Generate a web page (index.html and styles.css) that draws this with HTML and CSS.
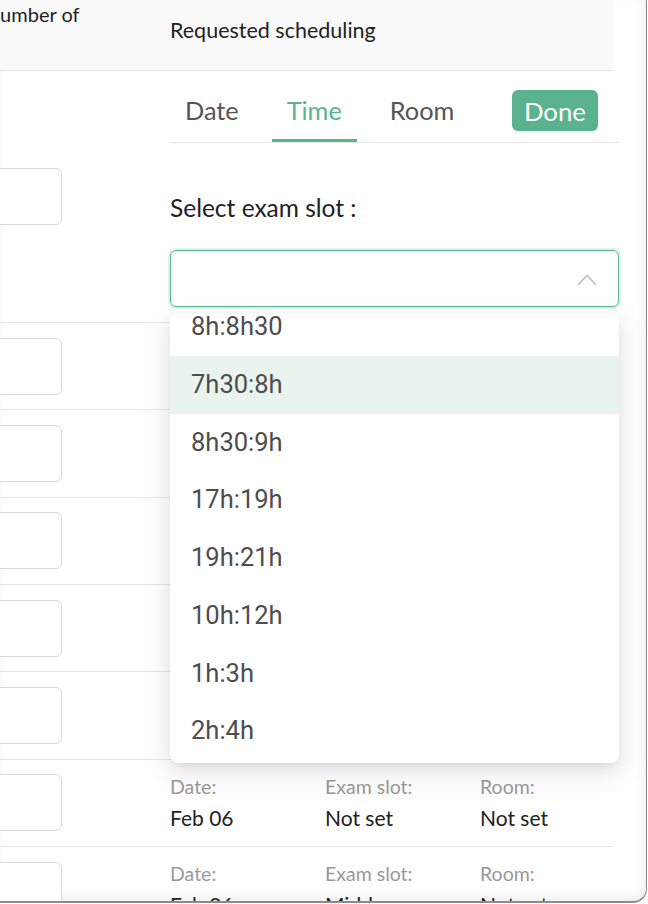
FILE: index.html
```html
<!DOCTYPE html>
<html>
<head>
    <title>Exam scheduling</title>
    <link rel="stylesheet" href="styles.css">
</head>
<body>
    <div class="window">
        <div class="table">
            <div class="row head">
                <div class="cell first"><span class="head-left">Number of</span></div>
                <div class="cell second">Requested scheduling</div>
            </div>

            <div class="row main">
                <div class="cell first"><div class="input"></div></div>
                <div class="cell second editor">
                    <div class="tabs">
                        <div class="tab">Date</div>
                        <div class="tab active">Time</div>
                        <div class="tab">Room</div>
                        <button class="done">Done</button>
                    </div>
                    <div class="field-label">Select exam slot :</div>
                    <div class="select-wrap">
                        <div class="select">
                            <svg class="arrow" width="20" height="12" viewBox="0 0 20 12">
                                <path d="M1 11 L10 1.5 L19 11" fill="none" stroke="#bdbdbd" stroke-width="1.6"/>
                            </svg>
                        </div>
                        <div class="dropdown">
                            <div class="options">
                                <div class="option">8h:8h30</div>
                                <div class="option hover">7h30:8h</div>
                                <div class="option">8h30:9h</div>
                                <div class="option">17h:19h</div>
                                <div class="option">19h:21h</div>
                                <div class="option">10h:12h</div>
                                <div class="option">1h:3h</div>
                                <div class="option">2h:4h</div>
                            </div>
                        </div>
                    </div>
                </div>
            </div>

            <div class="row info">
                <div class="cell first"><div class="input"></div></div>
                <div class="cell second"><div class="details"><span class="lbl">Date:</span><span class="lbl">Exam slot:</span><span class="lbl">Room:</span><span class="val">Feb 06</span><span class="val">Not set</span><span class="val">Not set</span></div></div>
            </div>
            <div class="row info">
                <div class="cell first"><div class="input"></div></div>
                <div class="cell second"><div class="details"><span class="lbl">Date:</span><span class="lbl">Exam slot:</span><span class="lbl">Room:</span><span class="val">Feb 06</span><span class="val">Not set</span><span class="val">Not set</span></div></div>
            </div>
            <div class="row info">
                <div class="cell first"><div class="input"></div></div>
                <div class="cell second"><div class="details"><span class="lbl">Date:</span><span class="lbl">Exam slot:</span><span class="lbl">Room:</span><span class="val">Feb 06</span><span class="val">Not set</span><span class="val">Not set</span></div></div>
            </div>
            <div class="row info">
                <div class="cell first"><div class="input"></div></div>
                <div class="cell second"><div class="details"><span class="lbl">Date:</span><span class="lbl">Exam slot:</span><span class="lbl">Room:</span><span class="val">Feb 06</span><span class="val">Not set</span><span class="val">Not set</span></div></div>
            </div>
            <div class="row info">
                <div class="cell first"><div class="input"></div></div>
                <div class="cell second"><div class="details"><span class="lbl">Date:</span><span class="lbl">Exam slot:</span><span class="lbl">Room:</span><span class="val">Feb 06</span><span class="val">Not set</span><span class="val">Not set</span></div></div>
            </div>
            <div class="row info">
                <div class="cell first"><div class="input"></div></div>
                <div class="cell second"><div class="details"><span class="lbl">Date:</span><span class="lbl">Exam slot:</span><span class="lbl">Room:</span><span class="val">Feb 06</span><span class="val">Not set</span><span class="val">Not set</span></div></div>
            </div>
            <div class="row info">
                <div class="cell first"><div class="input"></div></div>
                <div class="cell second"><div class="details"><span class="lbl">Date:</span><span class="lbl">Exam slot:</span><span class="lbl">Room:</span><span class="val">Feb 06</span><span class="val">Midday</span><span class="val">Not set</span></div></div>
            </div>
        </div>
    </div>
</body>
</html>
```

FILE: styles.css
```css
body {
    margin: 0;
    background-color: #fff;
    font-family: Lato, "Open Sans", sans-serif;
    color: #222;
}

.window {
    width: 646px;
    height: 901px;
    overflow: hidden;
    background-color: #fff;
    border-right: 1px solid #8c8c8c;
    border-bottom: 2px solid #8c8c8c;
    border-bottom-right-radius: 14px;
    box-shadow: inset -2px -4px 10px rgba(0, 0, 0, 0.07);
}

.table {
    width: 644px;
    margin-left: -31px;
}

.row {
    display: grid;
    grid-template-columns: 201px 443px;
    align-items: center;
    border-bottom: 1px solid #e6e6e6;
    box-sizing: border-box;
}

.cell.first {
    padding-left: 16px;
}

.head {
    height: 71px;
    background-color: #fafafa;
    font-size: 20px;
}

.head-left {
    display: block;
}

.head .cell.first {
    align-self: start;
    padding-top: 2px;
}

.head .cell.second {
    padding-bottom: 10px;
    font-size: 21.5px;
}

.input {
    width: 77px;
    height: 57px;
    box-sizing: border-box;
    border: 1px solid #d9d9d9;
    border-radius: 6px;
    background-color: #fff;
}

/* scheduling editor */
.editor {
    padding: 14px 0 15px;
    width: 449px;
}

.tabs {
    display: flex;
    align-items: flex-start;
    height: 57px;
    border-bottom: 1px solid #e6e6e6;
}

.tab {
    padding: 11px 15px 0;
    margin-right: 18px;
    height: 57px;
    box-sizing: border-box;
    line-height: 29px;
    font-size: 25.3px;
    color: #555;
}

.tab.active {
    color: #5ab38e;
    border-bottom: 3px solid #5ab38e;
}

.done {
    margin: 5px 21px 0 auto;
    height: 41px;
    padding: 0 12px;
    border: none;
    border-radius: 6px;
    background-color: #5ab38e;
    color: #fff;
    font-family: Lato, sans-serif;
    font-size: 25.8px;
    box-shadow: 0 2px 0 rgba(0, 0, 0, 0.04);
}

.field-label {
    margin-top: 50px;
    line-height: 30px;
    font-size: 24.5px;
}

.select-wrap {
    position: relative;
    margin-top: 27px;
}

.select {
    height: 57px;
    box-sizing: border-box;
    border: 1px solid #5ab38e;
    border-radius: 6px;
    box-shadow: 0 0 0 2px rgba(90, 179, 142, 0.18);
    display: flex;
    align-items: center;
    justify-content: flex-end;
    padding-right: 21px;
}

.arrow {
    margin-top: 3px;
}

.dropdown {
    position: absolute;
    top: 64px;
    left: 0;
    width: 449px;
    height: 449px;
    overflow: hidden;
    background-color: #fff;
    border-radius: 8px;
    box-shadow: 0 6px 16px rgba(0, 0, 0, 0.08), 0 3px 6px -4px rgba(0, 0, 0, 0.12), 0 9px 28px 8px rgba(0, 0, 0, 0.05);
    z-index: 2;
}

.options {
    margin-top: -16px;
}

.option {
    height: 57.75px;
    line-height: 57.75px;
    padding-left: 21px;
    font-family: Roboto, "Liberation Sans", sans-serif;
    font-size: 25.5px;
    color: #4d4d4d;
}

.option.hover {
    background-color: #eaf4ee;
}

/* rows below */
.info {
    height: 87.33px;
}

.details {
    display: grid;
    grid-template-columns: 155px 155px 155px;
    padding-top: 14px;
}

.info .cell.second {
    align-self: start;
}

.lbl {
    line-height: 26px;
    font-size: 19.5px;
    color: #999;
}

.val {
    margin-top: 3px;
    line-height: 30px;
    font-size: 21px;
    color: #222;
}
```
